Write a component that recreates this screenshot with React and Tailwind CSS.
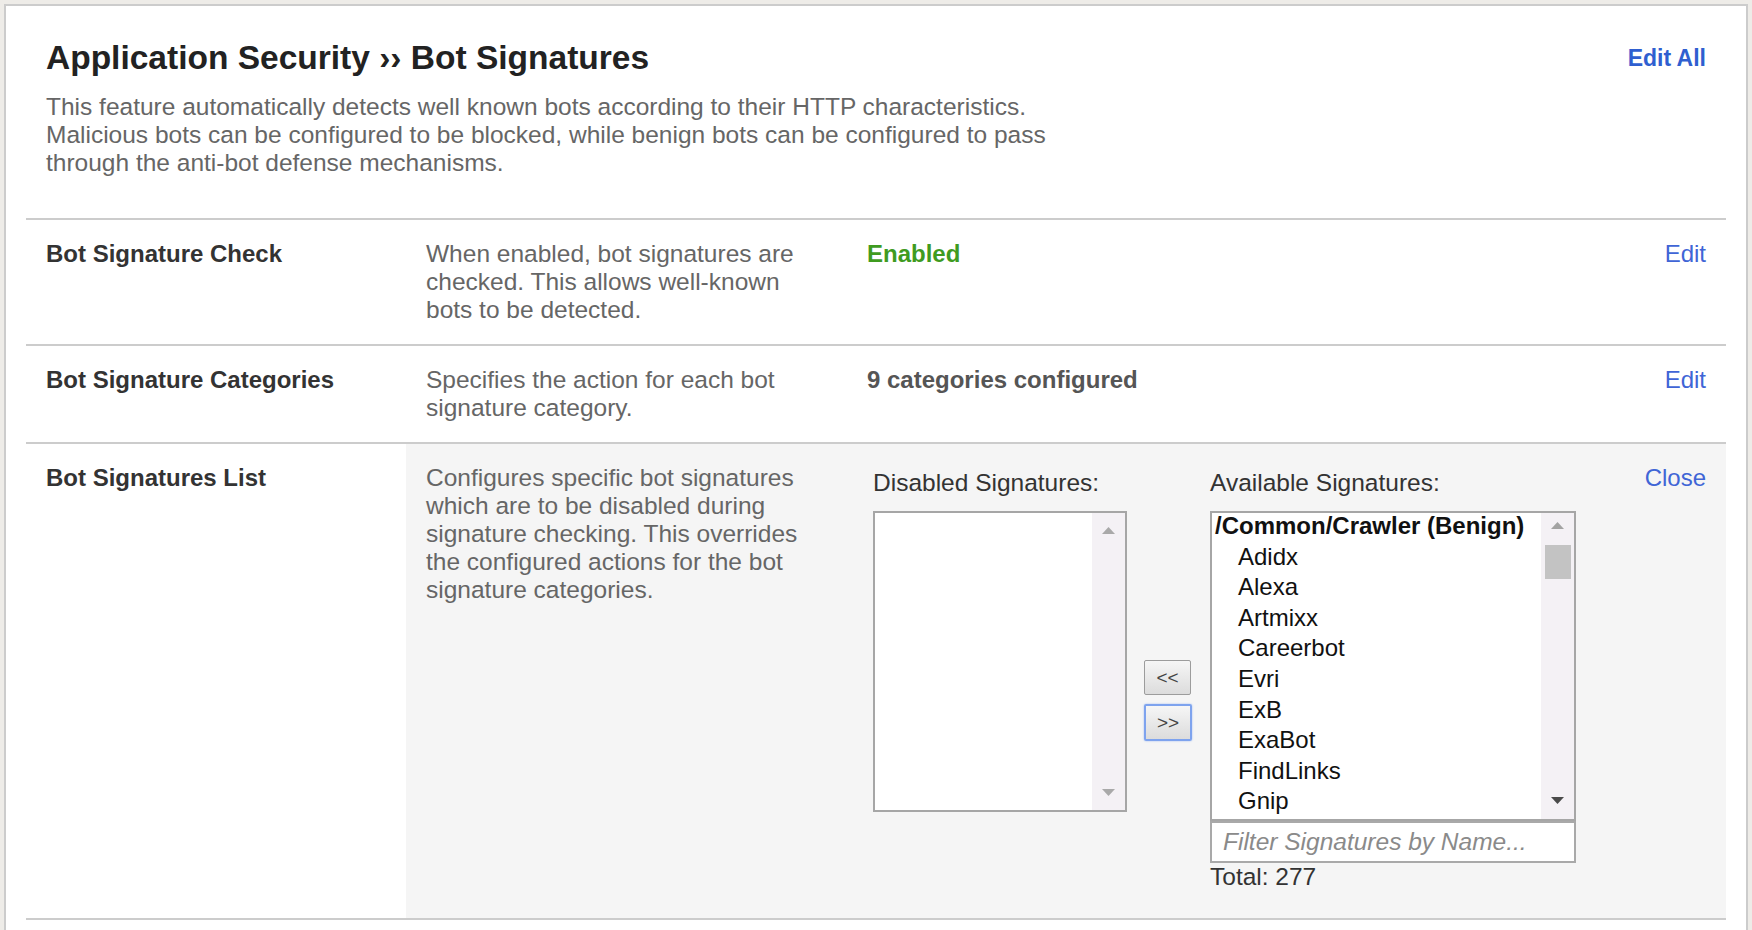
import React from "react";

const F = "font-['Liberation_Sans',Arial,sans-serif]";

function Tri({ up = true, color }) {
  return (
    <svg width="13" height="7" viewBox="0 0 13 7" className="block">
      {up ? (
        <path d="M6.5 0 L13 7 L0 7 Z" fill={color} />
      ) : (
        <path d="M0 0 L13 0 L6.5 7 Z" fill={color} />
      )}
    </svg>
  );
}

const avail = ["Adidx", "Alexa", "Artmixx", "Careerbot", "Evri", "ExB", "ExaBot", "FindLinks", "Gnip"];

function Row({ label, desc, children, action, shaded = false }) {
  return (
    <div className="flex border-t-2 border-[#cccccc]">
      <div className="w-[380px] shrink-0 px-5 pt-5 pb-5 text-[24px] leading-[28px] font-bold text-[#333]">
        {label}
      </div>
      <div className={`flex flex-1 ${shaded ? "bg-[#f5f5f5]" : ""}`}>
        <div className="w-[441px] shrink-0 px-5 pt-5 pb-5 text-[24.5px] leading-[28px] text-[#666]">{desc}</div>
        <div className="flex-1">{children}</div>
        <div className="px-5 pt-5 text-[24px] leading-[28px] text-[#4065d6]">{action}</div>
      </div>
    </div>
  );
}

export default function App() {
  return (
    <div className={`min-h-screen bg-[#eeece8] pt-1 px-1 ${F}`}>
      <div className="bg-white border-2 border-b-0 border-[#cccccc] min-h-[926px]">
        <div className="mx-5">
          <header className="flex justify-between px-5 pt-[33px] pb-[41px]">
            <div>
              <h1 className="text-[33.5px] leading-[38px] font-bold text-[#222]">
                Application Security ›› Bot Signatures
              </h1>
              <p className="mt-4 text-[24.5px] leading-[28px] text-[#666]">
                This feature automatically detects well known bots according to their HTTP characteristics.
                <br />
                Malicious bots can be configured to be blocked, while benign bots can be configured to pass
                <br />
                through the anti-bot defense mechanisms.
              </p>
            </div>
            <a className="text-[23px] leading-[38px] font-bold text-[#2f5fd0]">Edit All</a>
          </header>

          <Row
            label="Bot Signature Check"
            desc={
              <>
                When enabled, bot signatures are
                <br />
                checked. This allows well-known
                <br />
                bots to be detected.
              </>
            }
            action="Edit"
          >
            <div className="px-5 pt-5 text-[24px] leading-[28px] font-bold text-[#3f9b1f]">Enabled</div>
          </Row>

          <Row
            label="Bot Signature Categories"
            desc={
              <>
                Specifies the action for each bot
                <br />
                signature category.
              </>
            }
            action="Edit"
          >
            <div className="px-5 pt-5 text-[24px] leading-[28px] font-bold text-[#555]">9 categories configured</div>
          </Row>

          <Row
            shaded
            label="Bot Signatures List"
            desc={
              <>
                Configures specific bot signatures
                <br />
                which are to be disabled during
                <br />
                signature checking. This overrides
                <br />
                the configured actions for the bot
                <br />
                signature categories.
              </>
            }
            action="Close"
          >
            <div className="flex items-start pl-[26px] pt-[25px] pb-[27px] text-[24.5px] leading-[28px] text-[#333]">
              {/* Disabled */}
              <div className="w-[254px] shrink-0">
                <div>Disabled Signatures:</div>
                <div className="mt-[14px] h-[301px] border-2 border-[#a6a6a6] bg-white flex">
                  <div className="flex-1" />
                  <div className="w-[33px] bg-[#f4f1f5] flex flex-col items-center justify-between pt-[14px] pb-[14px]">
                    <Tri up color="#a9a9a9" />
                    <Tri up={false} color="#a9a9a9" />
                  </div>
                </div>
              </div>

              {/* Buttons */}
              <div className="ml-[17px] mt-[191px] w-[48px] shrink-0 flex flex-col items-start gap-[9px]">
                <button className="flex items-center justify-center h-[35px] w-[47px] rounded-[2px] border border-[#9c9c9c] bg-gradient-to-b from-[#f6f6f6] to-[#dcdcdc] text-[19px] leading-[20px] text-[#444]">
                  &lt;&lt;
                </button>
                <button className="flex items-center justify-center h-[37px] w-[48px] rounded-[2px] border-2 border-[#7ea3ee] bg-gradient-to-b from-[#f6f6f6] to-[#dcdcdc] text-[19px] leading-[20px] text-[#444] shadow-[0_0_2px_#9bb8f2]">
                  &gt;&gt;
                </button>
              </div>

              {/* Available */}
              <div className="ml-[18px] w-[366px] shrink-0">
                <div>Available Signatures:</div>
                <div className="mt-[14px] h-[310px] border-2 border-[#a6a6a6] bg-white flex">
                  <div className="flex-1 overflow-hidden">
                    <div className="-mt-[2px] text-[24px] leading-[30.6px] text-[#111]">
                      <div className="pl-[3px] font-bold">/Common/Crawler (Benign)</div>
                      {avail.map((a) => (
                        <div key={a} className="pl-[26px]">
                          {a}
                        </div>
                      ))}
                    </div>
                  </div>
                  <div className="w-[33px] bg-[#f4f1f5] flex flex-col items-center pt-[9px] pb-[15px]">
                    <Tri up color="#a3a3a3" />
                    <div className="mt-[16px] h-[34px] w-[26px] bg-[#c3c3c3]" />
                    <div className="flex-1" />
                    <Tri up={false} color="#4a4a4a" />
                  </div>
                </div>
                <div className="h-[42px] border-2 border-[#a9a9a9] bg-white pl-[11px] flex items-center text-[24.5px] italic text-[#8a8a8a]">
                  Filter Signatures by Name...
                </div>
                <div className="text-[#333]">Total: 277</div>
              </div>
            </div>
          </Row>
          <div className="border-t-2 border-[#cccccc]" />
        </div>
      </div>
    </div>
  );
}
